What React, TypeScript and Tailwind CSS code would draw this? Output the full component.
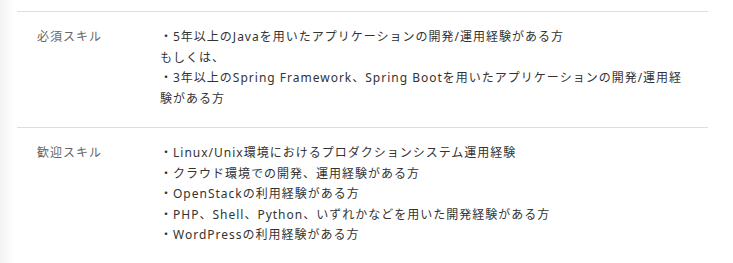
const rows = [
  {
    label: "必須スキル",
    lines: [
      "・5年以上のJavaを用いたアプリケーションの開発/運用経験がある方",
      "もしくは、",
      "・3年以上のSpring Framework、Spring Bootを用いたアプリケーションの開発/運用経験がある方",
    ],
  },
  {
    label: "歓迎スキル",
    lines: [
      "・Linux/Unix環境におけるプロダクションシステム運用経験",
      "・クラウド環境での開発、運用経験がある方",
      "・OpenStackの利用経験がある方",
      "・PHP、Shell、Python、いずれかなどを用いた開発経験がある方",
      "・WordPressの利用経験がある方",
    ],
  },
];

export default function App() {
  return (
    <div
      className="flex w-[733px] h-[263px] bg-white overflow-hidden"
      style={{ fontFamily: '"Noto Sans", "Noto Sans CJK JP", sans-serif' }}
    >
      {/* faint shadow from the side panel */}
      <div className="w-[14px] shrink-0 bg-gradient-to-r from-[#f2f2f2] to-white" />
      <div className="ml-[3px] w-[691px] pt-[11px]">
        <dl className="border-t border-[#dedede]">
          {rows.map((row) => (
            <div key={row.label} className="flex border-b border-[#dedede] pt-[15px] pb-[18px] pl-[20px]">
              <dt className="w-[123px] shrink-0 text-[12px] tracking-[1px] leading-[20.5px] text-[#666]">{row.label}</dt>
              <dd className="w-[528px] text-[12px] tracking-[1px] leading-[20.5px] text-[#333]">
                {row.lines.map((line, i) => (
                  <p key={i}>{line}</p>
                ))}
              </dd>
            </div>
          ))}
        </dl>
      </div>
    </div>
  );
}
